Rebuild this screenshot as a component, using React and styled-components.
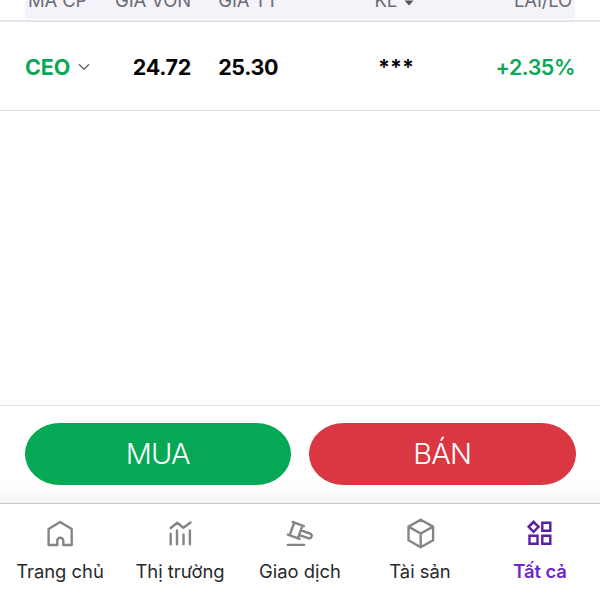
import React from 'react'
import styled, { createGlobalStyle } from 'styled-components'

const GlobalStyle = createGlobalStyle`
* {
    box-sizing: border-box;
}

body {
    margin: 0;
    background: #fff;
    font-family: Inter, 'Noto Sans', sans-serif;
}
`

const Screen = styled.div`
display: flex;
flex-direction: column;
height: 600px;
overflow: hidden;
`

const HeaderWrap = styled.div`
flex: none;
height: 22px;
padding: 0 25px;
border-bottom: 2px solid #e4e3e9;
`

const Columns = styled.div`
display: grid;
grid-template-columns: 75px 91px 87px 136px 161px;
`

const TableHeader = styled(Columns)`
height: 19px;
align-items: start;
border-radius: 0 0 4px 4px;
background: #f4f3fa;
`

// the header is scrolled half out of view
const HeaderCell = styled.div`
display: flex;
align-items: center;
justify-content: ${(props) => props.$left ? 'flex-start' : 'flex-end'};
gap: 7px;
padding: ${(props) => props.$pad || '0'};
color: #6c6b72;
font-size: 18.5px;
letter-spacing: -0.15px;
line-height: 24px;
margin-top: -12px;
white-space: nowrap;
`

const SortArrow = styled.svg`
width: 10px;
height: 6px;
margin-top: 6px;
`

const Row = styled(Columns)`
flex: none;
height: 89px;
padding: 1px 25px 0;
align-items: center;
border-bottom: 1px solid #e2e2e6;
`

const Cell = styled.div`
display: flex;
align-items: center;
justify-content: ${(props) => props.$left ? 'flex-start' : 'flex-end'};
gap: 8px;
color: ${(props) => props.$green ? '#09a757' : '#060606'};
font-size: 21.5px;
font-weight: ${(props) => props.$weight || 650};
line-height: 28px;
letter-spacing: ${(props) => props.$spacing || '-0.3px'};
white-space: nowrap;
`

const Chevron = styled.svg`
flex: none;
width: 12px;
height: 8px;
`

const Empty = styled.div`
flex: 1;
`

const Actions = styled.div`
display: flex;
flex: none;
gap: 18px;
height: 98px;
padding: 17px 24.5px 0;
border-top: 1px solid #e4e4e4;
background: linear-gradient(#fff 80%, #f5f5f5);
`

const ActionButton = styled.button`
flex: 1;
height: 61.5px;
padding: 0;
border: 0;
border-radius: 35px / 30.75px;
background: ${(props) => props.$color};
color: #fff;
font: 300 29px/62px Inter, sans-serif;
letter-spacing: -0.8px;
`

const TabBar = styled.nav`
display: grid;
flex: none;
grid-template-columns: repeat(5, 1fr);
height: 97px;
border-top: 1px solid #c9c9c9;
background: #fff;
`

const Tab = styled.div`
display: flex;
flex-direction: column;
align-items: center;
padding-top: 9px;
color: ${(props) => props.$active ? '#6d28c9' : '#29292b'};
font-size: 18.4px;
font-weight: ${(props) => props.$active ? 600 : 400};
letter-spacing: ${(props) => props.$active ? '-0.1px' : '0'};
line-height: 24px;
white-space: nowrap;
`

const TabIcon = styled.svg`
width: 40px;
height: 40px;
margin-bottom: 6px;
fill: none;
stroke: ${(props) => props.$active ? '#581fa6' : '#858585'};
stroke-width: 2.4;
stroke-linejoin: round;
stroke-linecap: round;
`

const tabs = [
  {
    label: 'Trang chủ',
    icon: <path d="M8.6 16 20.1 8.9 31.7 16v16h-8.4v-4.3a3 3 0 0 0-6 0v4.3H8.6Z" />,
  },
  {
    label: 'Thị trường',
    icon: <path d="M10.7 21v10.3M17 17.4v13.9M23.5 21.5v9.8M29.9 17.4v13.9M10.7 15l6.6-5.3 6.1 5 7.1-5.2" />,
  },
  {
    label: 'Giao dịch',
    icon: <path d="M12.7 8.9l11.1 4.3M7.9 21.6l11.7 4.3M14.2 9.5 9.7 22.2M22.3 12.8l-4.4 12.4M21 17.3l9 3.2a2.5 2.5 0 0 1-1.8 4.7l-8.8-3.1M7.8 31.9h16.3" />,
  },
  {
    label: 'Tài sản',
    icon: <path d="M20.7 6.8l12.4 6.8v13.6l-12.4 7-12.2-7V13.6ZM8.5 13.6l12.2 6.9 12.4-6.9M20.7 20.5v13.7" />,
  },
  {
    label: 'Tất cả',
    active: true,
    icon: <path strokeLinejoin="miter" d="M13.6 8.8l5 5-5 5-5-5ZM22.3 9.8h8v8h-8ZM9.5 22.8h8v8h-8ZM22.3 22.8h8v8h-8Z" />,
  },
]

export default function App() {
  return (
    <>
      <GlobalStyle />
      <Screen>
        <HeaderWrap>
          <TableHeader>
            <HeaderCell $left $pad="0 0 0 3px">MÃ CP</HeaderCell>
            <HeaderCell>GIÁ VỐN</HeaderCell>
            <HeaderCell>GIÁ TT</HeaderCell>
            <HeaderCell>
              KL
              <SortArrow viewBox="0 0 10 6">
                <path d="M0.5 0.5h9L5 5.5Z" fill="#55545a" />
              </SortArrow>
            </HeaderCell>
            <HeaderCell $pad="0 3px 0 0">LÃI/LỖ</HeaderCell>
          </TableHeader>
        </HeaderWrap>
        <Row>
          <Cell $left $green $weight={700} $spacing="-0.1px">
            CEO
            <Chevron viewBox="0 0 12 8" fill="none" stroke="#66666a" strokeWidth="1.4">
              <path d="M1 1.2 6 6.2l5-5" />
            </Chevron>
          </Cell>
          <Cell>24.72</Cell>
          <Cell $spacing="-0.4px">25.30</Cell>
          <Cell $spacing="0">***</Cell>
          <Cell $green $weight={600} $spacing="-0.5px">+2.35%</Cell>
        </Row>
        <Empty />
        <Actions>
          <ActionButton $color="#05a955">MUA</ActionButton>
          <ActionButton $color="#d93843">BÁN</ActionButton>
        </Actions>
        <TabBar>
          {tabs.map((tab) => (
            <Tab key={tab.label} $active={tab.active}>
              <TabIcon viewBox="0 0 40 40" $active={tab.active}>{tab.icon}</TabIcon>
              {tab.label}
            </Tab>
          ))}
        </TabBar>
      </Screen>
    </>
  )
}
